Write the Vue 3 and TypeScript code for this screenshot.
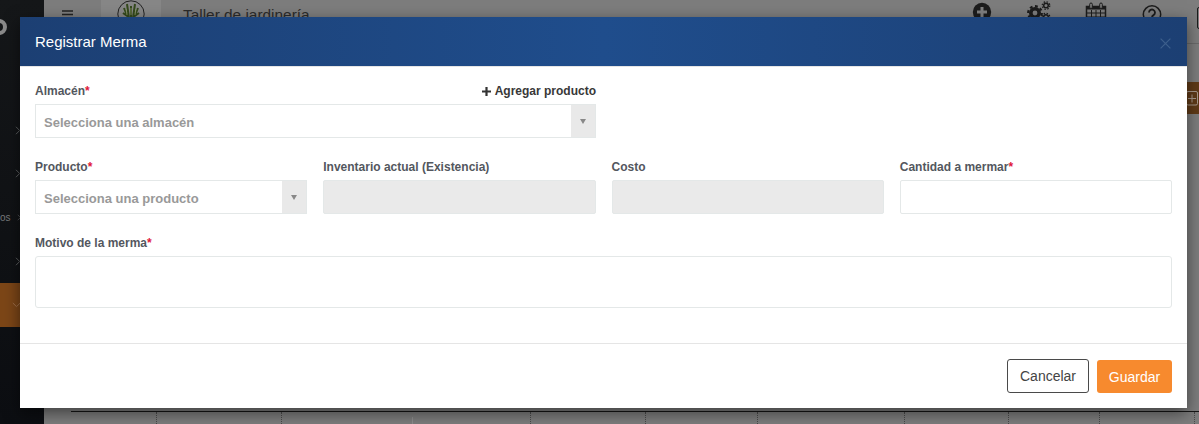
<script setup lang="ts">
const sideRows = [
  { top: 125, dir: 'right' },
  { top: 168, dir: 'right' },
  { top: 212, dir: 'right', text: 'os' },
  { top: 256, dir: 'right' },
]
const tableTicks = [156, 281, 530, 645, 757, 904, 1008, 1099, 1194]
</script>

<template>
  <div class="page">
    <aside class="sidebar">
      <span class="brand-mark"></span>
      <div v-for="r in sideRows" :key="r.top" class="side-row" :style="{ top: r.top + 'px' }">
        <span class="side-text">{{ r.text }}</span>
        <svg width="6" height="9" viewBox="0 0 6 9"><path d="M1 .8 4.600 4.500 1 8.200" fill="none" stroke="#5c5e60" stroke-width="1"/></svg>
      </div>
      <div class="side-active">
        <svg width="9" height="6" viewBox="0 0 9 6"><path d="M.8 1 4.500 4.600 8.200 1" fill="none" stroke="#a0704a" stroke-width="1"/></svg>
      </div>
    </aside>
    <header class="topbar">
      <svg class="burger" width="13" height="10" viewBox="0 0 13 10"><path d="M1 1h11M1 4.500h11M1 8h11" stroke="#222" stroke-width="1.600"/></svg>
      <div class="logo-cell">
        <svg width="30" height="30" viewBox="0 0 30 30">
          <circle cx="15" cy="14" r="13.200" fill="none" stroke="#222" stroke-width="1"/>
          <path d="M12 18 8 8M13 18 11 4M15 18V6M17 18l2-14M18 18l4-10M14 18 7 13M16 18l7-5" stroke="#34491c" stroke-width="2"/>
          <path d="M11 15 10 9M15 15V8M19 15l1-6" stroke="#8d9a6a" stroke-width=".8"/>
          <path d="M10 18h10l-1 5h-8z" fill="#2a2a22"/>
        </svg>
      </div>
      <span class="shop">Taller de jardinería</span>
    </header>
    <svg class="top-icon i-plus" width="20" height="24" viewBox="0 0 20 24"><circle cx="10" cy="12" r="9.200" fill="#1c1c1c"/><path d="M10 7v10M5 12h10" stroke="#808080" stroke-width="3"/></svg>
    <svg class="top-icon i-gear" width="26" height="24" viewBox="0 0 26 24">
      <circle cx="9" cy="13" r="4.200" fill="none" stroke="#1c1c1c" stroke-width="3.600"/>
      <circle cx="9" cy="13" r="6.800" fill="none" stroke="#1c1c1c" stroke-width="2.200" stroke-dasharray="2.800 2.500"/>
      <circle cx="20" cy="5.500" r="2.300" fill="none" stroke="#1c1c1c" stroke-width="1.500"/>
      <circle cx="20" cy="5.500" r="3.800" fill="none" stroke="#1c1c1c" stroke-width="1.200" stroke-dasharray="1.500 1.500"/>
      <circle cx="20" cy="17" r="2.300" fill="none" stroke="#1c1c1c" stroke-width="1.500"/>
      <circle cx="20" cy="17" r="3.800" fill="none" stroke="#1c1c1c" stroke-width="1.200" stroke-dasharray="1.500 1.500"/>
    </svg>
    <svg class="top-icon i-cal" width="22" height="24" viewBox="0 0 22 24">
      <rect x="1.500" y="6.500" width="19" height="16" fill="none" stroke="#1c1c1c" stroke-width="1.500"/>
      <path d="M1 8h20" stroke="#1c1c1c" stroke-width="3"/>
      <path d="M2 13h18M2 17h18M6.500 10v13M11 10v13M15.500 10v13" stroke="#1c1c1c" stroke-width="1"/>
      <rect x="4.700" y="3" width="2.600" height="5.500" rx="1.300" fill="#808080" stroke="#1c1c1c"/>
      <rect x="14.700" y="3" width="2.600" height="5.500" rx="1.300" fill="#808080" stroke="#1c1c1c"/>
    </svg>
    <svg class="top-icon i-help" width="20" height="24" viewBox="0 0 20 24">
      <circle cx="10" cy="14.500" r="8.700" fill="none" stroke="#1c1c1c" stroke-width="1.500"/>
      <path d="M7 12.500a3 3 0 1 1 4.500 2.600c-1 .6-1.500 1-1.500 2.200" fill="none" stroke="#1c1c1c" stroke-width="1.800"/>
      <circle cx="10" cy="19.700" r="1.100" fill="#1c1c1c"/>
    </svg>
    <span class="edge-icon"></span>
    <div class="top-rule"></div>
    <div class="orange-btn">
      <svg width="13" height="15" viewBox="0 0 13 15"><rect x=".5" y=".5" width="11" height="13.500" rx="1.500" fill="none" stroke="#a89a8e"/><path d="M6 3.500v8M2 7.500h8" stroke="#a89a8e"/></svg>
    </div>
    <div class="table-line"></div>
    <span v-for="x in tableTicks" :key="x" class="tick" :style="{ left: x + 'px' }"></span>
    <span class="tick-solid"></span>

    <section class="modal">
      <div class="m-head">
        <h4>Registrar Merma</h4>
        <svg class="close" width="11" height="11" viewBox="0 0 11 11"><path d="M.6.6 10.400 10.400M10.400.6.6 10.400" stroke="#3d5f8c" stroke-width="1.200"/></svg>
      </div>
      <div class="m-body">
        <div class="half">
          <div class="field">
            <div class="label-row">
              <label>Almacén<em>*</em></label>
              <a class="add"><svg width="9" height="9" viewBox="0 0 9 9"><path d="M4.500 0v9M0 4.500h9" stroke="#333" stroke-width="2.200"/></svg>Agregar producto</a>
            </div>
            <div class="select">
              <span>Selecciona una almacén</span>
              <b class="arrow"><i></i></b>
            </div>
          </div>
        </div>
        <div class="four">
          <div class="field">
            <label>Producto<em>*</em></label>
            <div class="select">
              <span>Selecciona una producto</span>
              <b class="arrow"><i></i></b>
            </div>
          </div>
          <div class="field">
            <label>Inventario actual (Existencia)</label>
            <div class="input off"></div>
          </div>
          <div class="field">
            <label>Costo</label>
            <div class="input off"></div>
          </div>
          <div class="field">
            <label>Cantidad a mermar<em>*</em></label>
            <div class="input"></div>
          </div>
        </div>
        <div class="field">
          <label>Motivo de la merma<em>*</em></label>
          <div class="textarea"></div>
        </div>
      </div>
      <div class="m-foot">
        <button class="btn cancel">Cancelar</button>
        <button class="btn save">Guardar</button>
      </div>
    </section>
  </div>
</template>

<style>
html, body { margin: 0; padding: 0; }
</style>

<style scoped>
.page {
  position: relative;
  width: 1199px;
  height: 424px;
  overflow: hidden;
  background: #7d7d7d;
  font-family: "Liberation Sans", Arial, sans-serif;
}
.sidebar {
  position: absolute;
  left: 0;
  top: 0;
  bottom: 0;
  width: 44px;
  background: linear-gradient(180deg, #151719, #0c0e12);
}
.brand-mark {
  position: absolute;
  left: -9px;
  top: 19px;
  width: 8px;
  height: 8px;
  border: 4px solid #8a8a8a;
  border-radius: 50%;
}
.side-row {
  position: absolute;
  left: 0;
  width: 21px;
  height: 10px;
  display: flex;
  align-items: center;
  justify-content: flex-end;
  gap: 6px;
}
.side-text { font-size: 10px; color: #77797b; }
.side-active {
  position: absolute;
  top: 283px;
  left: 0;
  width: 44px;
  height: 44px;
  background: #7c4617;
  display: flex;
  align-items: center;
  padding-left: 12px;
  box-sizing: border-box;
}
.topbar {
  position: absolute;
  left: 44px;
  right: 0;
  top: 0;
  height: 44px;
  display: flex;
  align-items: flex-start;
}
.burger { margin: 9.500px 0 0 17px; flex: none; }
.logo-cell {
  width: 60px;
  height: 44px;
  margin-left: 27px;
  background: #878787;
  display: flex;
  justify-content: center;
  flex: none;
}
.shop { margin-left: 22px; margin-top: 5px; font-size: 15.400px; color: #2b2b2b; line-height: 20px; }
.top-icon { position: absolute; top: 0; }
.i-plus { left: 972px; }
.i-gear { left: 1026px; }
.i-cal { left: 1085px; }
.i-help { left: 1142px; }
.edge-icon { position: absolute; left: 1197px; top: 7px; width: 6px; height: 20px; border: 1.500px solid #1c1c1c; border-radius: 2px; }
.top-rule { position: absolute; left: 1187px; right: 0; top: 43px; height: 1px; background: #6a6a6a; }
.orange-btn {
  position: absolute;
  left: 1180px;
  top: 82px;
  width: 19px;
  height: 32px;
  background: #5f3a17;
  display: flex;
  align-items: center;
  padding-left: 6px;
  box-sizing: border-box;
}
.table-line { position: absolute; left: 71px; right: 0; top: 411px; height: 1px; background: #161616; }
.tick { position: absolute; top: 412px; bottom: 0; border-left: 1px dotted #4a4a4a; }
.tick-solid { position: absolute; left: 412px; top: 417px; bottom: 0; border-left: 1px solid #8e8e8e; }
.modal {
  position: absolute;
  left: 20px;
  top: 17px;
  width: 1167px;
  height: 391px;
  display: flex;
  flex-direction: column;
  background: #fff;
  box-shadow: 0 5px 15px rgba(0, 0, 0, .5);
}
.m-head {
  height: 50px;
  flex: none;
  box-sizing: border-box;
  padding: 0 16px 0 15px;
  display: flex;
  align-items: center;
  justify-content: space-between;
  background: linear-gradient(90deg, #1c3f73 0%, #1f4d8c 50%, #1c3f73 100%);
  background-clip: padding-box;
  border-bottom: 1px solid #e5e5e5;
}
.m-head h4 { margin: 0; font-size: 15px; font-weight: 400; color: #fff; }
.close { margin-top: 3px; }
.m-body {
  flex: 1;
  padding: 16px 15px 0;
  display: flex;
  flex-direction: column;
  gap: 21px;
}
.half { width: 561px; }
.four { display: grid; grid-template-columns: repeat(4, 1fr); column-gap: 16px; }
.field { display: flex; flex-direction: column; gap: 5px; }
label, .add {
  font-size: 12px;
  line-height: 15px;
  padding-top: 1px;
  font-weight: 700;
  color: #53575e;
}
label em { font-style: normal; color: #e0173a; }
.label-row { display: flex; justify-content: space-between; }
.add { display: inline-flex; align-items: center; gap: 4px; color: #383838; }
.select, .input {
  height: 34px;
  box-sizing: border-box;
  border: 1px solid #e4e8e8;
  display: flex;
  align-items: center;
  font-size: 13px;
  font-weight: 700;
  color: #999;
}
.input { border-radius: 2px; }
.input.off { background: #eaeaea; }
.select span { flex: 1; padding: 3px 0 0 8px; }
.arrow {
  width: 24px;
  align-self: stretch;
  background: #e9e9e9;
  display: flex;
  align-items: center;
  justify-content: center;
}
.arrow i {
  width: 0;
  height: 0;
  border-left: 3.500px solid transparent;
  border-right: 3.500px solid transparent;
  border-top: 5px solid #888;
}
.textarea { height: 52px; box-sizing: border-box; border: 1px solid #e4e8e8; border-radius: 3px; }
.m-foot {
  flex: none;
  height: 65px;
  box-sizing: border-box;
  border-top: 1px solid #e5e5e5;
  padding: 15px 15px 0;
  display: flex;
  justify-content: flex-end;
  align-items: flex-start;
  gap: 8px;
}
.btn {
  font-family: inherit;
  font-size: 14px;
  height: 34px;
  box-sizing: border-box;
  border-radius: 3px;
  cursor: pointer;
  margin: 0;
}
.cancel { width: 82px; background: #fff; border: 1px solid #4a4a4a; color: #444; }
.save { width: 75px; height: 33px; margin-top: 1px; background: #f78a2e; border: none; color: #fff; }
</style>
